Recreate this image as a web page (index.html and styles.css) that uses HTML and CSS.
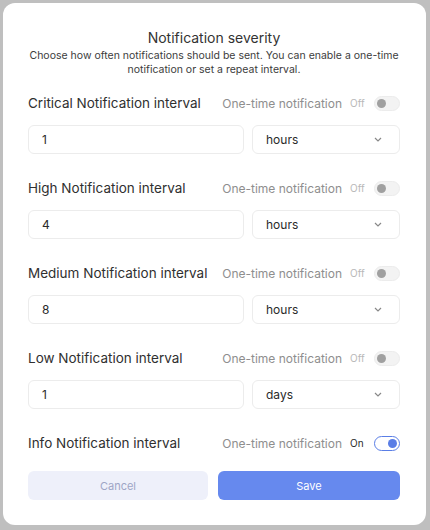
FILE: index.html
```html
<!DOCTYPE html>
<html>
<head>
<meta charset="utf-8">
<link rel="stylesheet" href="styles.css">
</head>
<body>
<div class="dialog">
  <h1 class="title">Notification severity</h1>
  <p class="desc">Choose how often notifications should be sent. You can enable a one-time notification or set a repeat interval.</p>

  <div class="row">
    <div class="row-head">
      <span class="label">Critical Notification interval</span>
      <span class="once">One-time notification</span>
      <span class="state">Off</span>
      <span class="toggle"><span class="knob"></span></span>
    </div>
    <div class="fields">
      <div class="input">1</div>
      <div class="select"><span>hours</span><svg class="chev" width="8" height="5" viewBox="0 0 8 5"><path d="M1 1l3 3 3-3" fill="none" stroke="#888" stroke-width="1.2"/></svg></div>
    </div>
  </div>

  <div class="row">
    <div class="row-head">
      <span class="label">High Notification interval</span>
      <span class="once">One-time notification</span>
      <span class="state">Off</span>
      <span class="toggle"><span class="knob"></span></span>
    </div>
    <div class="fields">
      <div class="input">4</div>
      <div class="select"><span>hours</span><svg class="chev" width="8" height="5" viewBox="0 0 8 5"><path d="M1 1l3 3 3-3" fill="none" stroke="#888" stroke-width="1.2"/></svg></div>
    </div>
  </div>

  <div class="row">
    <div class="row-head">
      <span class="label">Medium Notification interval</span>
      <span class="once">One-time notification</span>
      <span class="state">Off</span>
      <span class="toggle"><span class="knob"></span></span>
    </div>
    <div class="fields">
      <div class="input">8</div>
      <div class="select"><span>hours</span><svg class="chev" width="8" height="5" viewBox="0 0 8 5"><path d="M1 1l3 3 3-3" fill="none" stroke="#888" stroke-width="1.2"/></svg></div>
    </div>
  </div>

  <div class="row">
    <div class="row-head">
      <span class="label">Low Notification interval</span>
      <span class="once">One-time notification</span>
      <span class="state">Off</span>
      <span class="toggle"><span class="knob"></span></span>
    </div>
    <div class="fields">
      <div class="input">1</div>
      <div class="select"><span>days</span><svg class="chev" width="8" height="5" viewBox="0 0 8 5"><path d="M1 1l3 3 3-3" fill="none" stroke="#888" stroke-width="1.2"/></svg></div>
    </div>
  </div>

  <div class="row last">
    <div class="row-head">
      <span class="label">Info Notification interval</span>
      <span class="once">One-time notification</span>
      <span class="state on">On</span>
      <span class="toggle active"><span class="knob"></span></span>
    </div>
  </div>

  <div class="actions">
    <button class="btn cancel">Cancel</button>
    <button class="btn save">Save</button>
  </div>
</div>
</body>
</html>
```

FILE: styles.css
```css
* { box-sizing: border-box; }
html, body { margin: 0; padding: 0; }
body {
  background: #bfbfbf;
  width: 430px;
  height: 530px;
  padding: 3px 4px 5px 3px;
  font-family: Inter, "Noto Sans", "Liberation Sans", sans-serif;
  color: #2b2b2b;
}
.dialog {
  background: #ffffff;
  border-radius: 12px;
  height: 522px;
  padding: 26px 26px 0 25px;
}
.title {
  margin: 0;
  text-align: center;
  font-size: 14px;
  font-weight: 400;
  line-height: 18px;
  color: #333333;
}
.desc {
  margin: 2px 0 16px;
  text-align: center;
  font-size: 10.5px;
  line-height: 14px;
  color: #3c3c3c;
}
.row { margin-bottom: 24px; }
.row.last { margin-bottom: 18px; }
.row-head {
  display: flex;
  align-items: center;
  height: 20px;
}
.label {
  font-size: 13.5px;
  color: #303030;
  flex: 1;
}
.once {
  font-size: 12px;
  color: #8e8e8e;
}
.state {
  font-size: 10px;
  color: #b8b8b8;
  margin-left: 8px;
  width: 20px;
}
.state.on { color: #2a2a2a; }
.toggle {
  margin-left: 4px;
  width: 26px;
  height: 15px;
  border-radius: 8px;
  background: #f3f3f3;
  border: 1px solid #ececec;
  display: flex;
  align-items: center;
  padding: 0 2px;
}
.knob {
  width: 9px;
  height: 9px;
  border-radius: 50%;
  background: #a0a0a0;
}
.toggle.active {
  background: #fff;
  border: 1.2px solid #5a7ee6;
  justify-content: flex-end;
}
.toggle.active .knob { background: #5a7ee6; }
.fields {
  display: flex;
  gap: 8px;
  margin-top: 12px;
}
.input, .select {
  height: 29px;
  border: 1px solid #ececec;
  border-radius: 6px;
  display: flex;
  align-items: center;
  font-size: 12px;
  color: #2a2a2a;
}
.input { flex: 0 0 216px; padding-left: 13px; }
.select {
  flex: 1;
  padding: 0 17px 0 13px;
  justify-content: space-between;
}
.chev { display: block; }
.actions {
  display: flex;
  gap: 10px;
}
.btn {
  height: 29px;
  border: none;
  border-radius: 6px;
  font-family: inherit;
  font-size: 11px;
}
.cancel { flex: 0 0 180px; background: #eef0fa; color: #9ea6c6; }
.save { flex: 1; background: #6689ee; color: #ffffff; }
```
